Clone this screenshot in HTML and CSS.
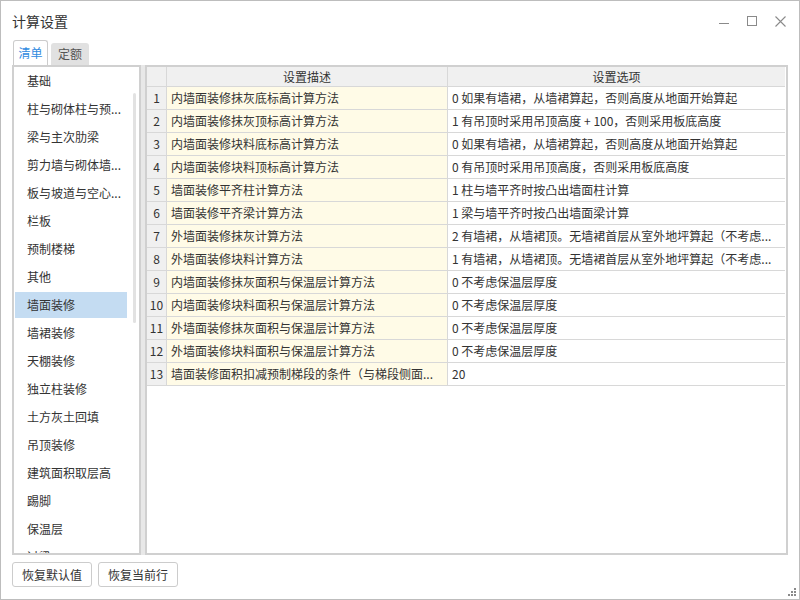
FILE: index.html
```html
<!DOCTYPE html>
<html lang="zh-CN">
<head>
<meta charset="utf-8">
<title>计算设置</title>
<link rel="stylesheet" href="styles.css">
</head>
<body>
<div class="window">
  <div class="titlebar">
    <span class="title">计算设置</span>
    <div class="controls">
      <svg class="ctl" width="10" height="11" viewBox="0 0 10 11"><line x1="0" y1="7.5" x2="10" y2="7.5" stroke="#8a8a8a" stroke-width="1"/></svg>
      <svg class="ctl" width="10" height="11" viewBox="0 0 10 11"><rect x="0.5" y="0.5" width="9" height="9" fill="none" stroke="#8a8a8a" stroke-width="1"/></svg>
      <svg class="ctl" width="11" height="11" viewBox="0 0 11 11"><path d="M0.5 0.5 L10.5 10.5 M10.5 0.5 L0.5 10.5" stroke="#8a8a8a" stroke-width="1.1" fill="none"/></svg>
    </div>
  </div>
  <div class="tabs">
    <div class="tab active">清单</div>
    <div class="tab">定额</div>
  </div>
  <div class="content">
    <div class="list-panel">
      <ul class="list">
        <li class="item">基础</li>
        <li class="item">柱与砌体柱与预...</li>
        <li class="item">梁与主次肋梁</li>
        <li class="item">剪力墙与砌体墙...</li>
        <li class="item">板与坡道与空心...</li>
        <li class="item">栏板</li>
        <li class="item">预制楼梯</li>
        <li class="item">其他</li>
        <li class="item selected">墙面装修</li>
        <li class="item">墙裙装修</li>
        <li class="item">天棚装修</li>
        <li class="item">独立柱装修</li>
        <li class="item">土方灰土回填</li>
        <li class="item">吊顶装修</li>
        <li class="item">建筑面积取层高</li>
        <li class="item">踢脚</li>
        <li class="item">保温层</li>
        <li class="item">过梁</li>
      </ul>
      <div class="scrollbar"></div>
    </div>
    <div class="splitter"></div>
    <div class="table-panel">
      <table class="grid">
        <colgroup>
          <col class="c-num">
          <col class="c-desc">
          <col class="c-opt">
        </colgroup>
        <thead>
          <tr><th class="num"></th><th>设置描述</th><th class="last">设置选项</th></tr>
        </thead>
        <tbody>
          <tr><td class="num">1</td><td class="desc">内墙面装修抹灰底标高计算方法</td><td class="opt">0 如果有墙裙，从墙裙算起，否则高度从地面开始算起</td></tr>
          <tr><td class="num">2</td><td class="desc">内墙面装修抹灰顶标高计算方法</td><td class="opt">1 有吊顶时采用吊顶高度 + 100，否则采用板底高度</td></tr>
          <tr><td class="num">3</td><td class="desc">内墙面装修块料底标高计算方法</td><td class="opt">0 如果有墙裙，从墙裙算起，否则高度从地面开始算起</td></tr>
          <tr><td class="num">4</td><td class="desc">内墙面装修块料顶标高计算方法</td><td class="opt">0 有吊顶时采用吊顶高度，否则采用板底高度</td></tr>
          <tr><td class="num">5</td><td class="desc">墙面装修平齐柱计算方法</td><td class="opt">1 柱与墙平齐时按凸出墙面柱计算</td></tr>
          <tr><td class="num">6</td><td class="desc">墙面装修平齐梁计算方法</td><td class="opt">1 梁与墙平齐时按凸出墙面梁计算</td></tr>
          <tr><td class="num">7</td><td class="desc">外墙面装修抹灰计算方法</td><td class="opt">2 有墙裙，从墙裙顶。无墙裙首层从室外地坪算起（不考虑...</td></tr>
          <tr><td class="num">8</td><td class="desc">外墙面装修块料计算方法</td><td class="opt">1 有墙裙，从墙裙顶。无墙裙首层从室外地坪算起（不考虑...</td></tr>
          <tr><td class="num">9</td><td class="desc">内墙面装修抹灰面积与保温层计算方法</td><td class="opt">0 不考虑保温层厚度</td></tr>
          <tr><td class="num">10</td><td class="desc">内墙面装修块料面积与保温层计算方法</td><td class="opt">0 不考虑保温层厚度</td></tr>
          <tr><td class="num">11</td><td class="desc">外墙面装修抹灰面积与保温层计算方法</td><td class="opt">0 不考虑保温层厚度</td></tr>
          <tr><td class="num">12</td><td class="desc">外墙面装修块料面积与保温层计算方法</td><td class="opt">0 不考虑保温层厚度</td></tr>
          <tr><td class="num">13</td><td class="desc">墙面装修面积扣减预制梯段的条件（与梯段侧面...</td><td class="opt">20</td></tr>
        </tbody>
      </table>
    </div>
  </div>
  <div class="footer">
    <button class="btn">恢复默认值</button>
    <button class="btn">恢复当前行</button>
  </div>
  <svg class="grip" width="9" height="9" viewBox="0 0 9 9">
    <rect x="6" y="0" width="2" height="2" fill="#8a8a8a"/>
    <rect x="3" y="3" width="2" height="2" fill="#8a8a8a"/>
    <rect x="6" y="3" width="2" height="2" fill="#8a8a8a"/>
    <rect x="0" y="6" width="2" height="2" fill="#8a8a8a"/>
    <rect x="3" y="6" width="2" height="2" fill="#8a8a8a"/>
    <rect x="6" y="6" width="2" height="2" fill="#8a8a8a"/>
  </svg>
</div>
</body>
</html>
```

FILE: styles.css
```css
* { box-sizing: border-box; }

html, body {
  margin: 0;
  padding: 0;
  background: #fff;
}

body {
  font-family: "Noto Sans CJK SC", "Noto Sans", sans-serif;
  font-size: 12px;
  color: #333;
}

.window {
  position: relative;
  width: 800px;
  height: 600px;
  border: 1px solid #bdbdbd;
  background: #fff;
  display: flex;
  flex-direction: column;
}

.titlebar {
  height: 39px;
  flex: none;
  display: flex;
  align-items: center;
  padding: 0 13px 0 11px;
}

.title {
  font-size: 14px;
  line-height: 20px;
  color: #333;
}

.controls {
  margin-left: auto;
  display: flex;
  align-items: center;
  gap: 18px;
  padding-top: 1px;
}

.ctl { display: block; }

.tabs {
  height: 25px;
  flex: none;
  display: flex;
  align-items: flex-end;
  padding-left: 12px;
  gap: 3px;
}

.tab {
  height: 22px;
  width: 38px;
  line-height: 22px;
  text-align: center;
  background: #e1e1e1;
  color: #555;
  border-radius: 3px 3px 0 0;
  font-size: 12px;
}

.tab.active {
  height: 25px;
  width: 35px;
  line-height: 24px;
  background: #fff;
  color: #2f8ae0;
  border: 1px solid #cccccc;
  border-bottom: none;
}

.content {
  height: 490px;
  flex: none;
  display: flex;
  margin: 0 11px 0 11px;
}

.list-panel {
  position: relative;
  width: 129px;
  flex: none;
  border: 2px solid #d0d0d0;
  overflow: hidden;
}

.list {
  list-style: none;
  margin: 0;
  padding: 1px 12px 0 1px;
}

.item {
  height: 26px;
  line-height: 26px;
  margin-bottom: 2px;
  padding-left: 12px;
  white-space: nowrap;
  overflow: hidden;
  color: #333;
}

.item.selected {
  background: #c4dcf2;
}

.scrollbar {
  position: absolute;
  top: 26px;
  right: 3px;
  width: 3px;
  height: 230px;
  border-radius: 2px;
  background: #e2e2e2;
}

.splitter {
  width: 4px;
  flex: none;
  background: #e8e8e8;
}

.table-panel {
  flex: 1;
  border: 2px solid #d0d0d0;
  background: #fff;
  overflow: hidden;
}

.grid {
  table-layout: fixed;
  border-collapse: separate;
  border-spacing: 0;
  width: 638px;
}

.c-num { width: 20px; }
.c-desc { width: 281px; }
.c-opt { width: 337px; }

.grid th,
.grid td {
  padding: 0 4px;
  border-right: 1px solid #d8d8d8;
  border-bottom: 1px solid #d8d8d8;
  white-space: nowrap;
  overflow: hidden;
  font-weight: normal;
  text-align: left;
}

.grid th {
  height: 20px;
  line-height: 19px;
  background: #f0f0f0;
  text-align: center;
  color: #333;
}

.grid td {
  height: 23px;
  line-height: 22px;
}

.grid .last,
.grid .opt {
  border-right: none;
}

.grid .num {
  padding: 0;
  text-align: center;
  background: #f0f0f0;
}

.grid .desc {
  background: #fffbe7;
}

.grid .opt {
  background: #fff;
}

.footer {
  flex: none;
  display: flex;
  gap: 6px;
  padding: 7px 0 0 11px;
}

.btn {
  height: 25px;
  padding: 0 9px;
  border: 1px solid #cccccc;
  border-radius: 3px;
  background: #fff;
  font-family: "Noto Sans CJK SC", "Noto Sans", sans-serif;
  font-size: 12px;
  color: #333;
  line-height: 23px;
}

.grip {
  position: absolute;
  right: 2px;
  bottom: 2px;
}
```
